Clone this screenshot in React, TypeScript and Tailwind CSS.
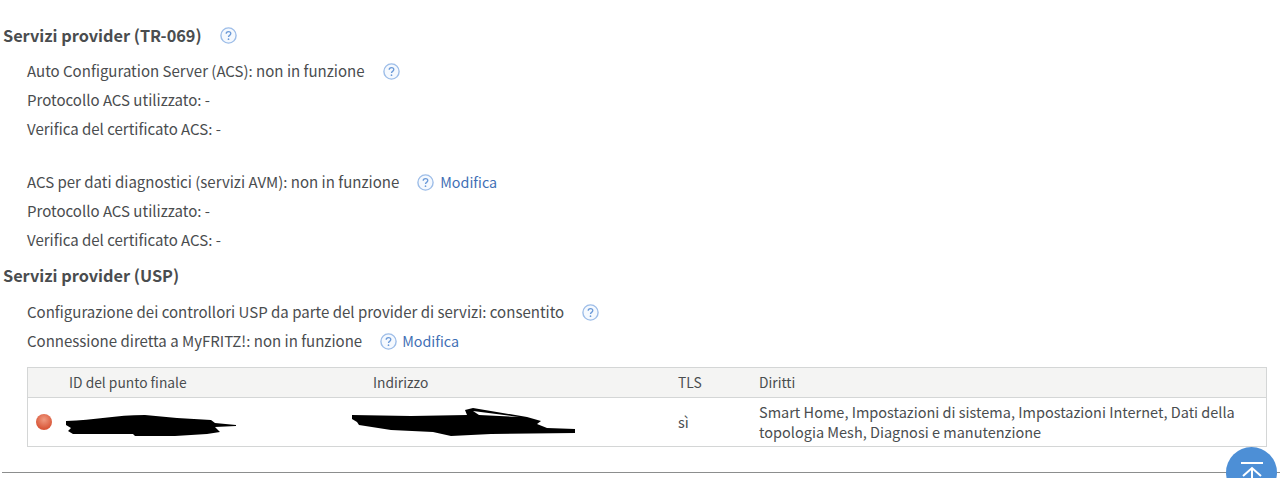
function HelpIcon({ className = "" }: { className?: string }) {
    return (
        <svg viewBox="0 0 17 17" className={`w-[17px] h-[17px] shrink-0 ${className}`} fill="none">
            <circle cx="8.5" cy="8.5" r="7.6" stroke="#9dbde8" strokeWidth="1.4" fill="#f5f9fe" />
            <path d="M6.2 6.8c0-1.4 1.1-2.2 2.3-2.2s2.3.8 2.3 2c0 1.8-2.3 1.7-2.3 3.4" stroke="#6b9ad8" strokeWidth="1.3" />
            <circle cx="8.5" cy="12.2" r=".85" fill="#6b9ad8" />
        </svg>
    );
}

function Row({ children }: { children: React.ReactNode }) {
    return <div className="flex items-center h-[29px] pl-[27px] whitespace-nowrap">{children}</div>;
}

function Scribble1() {
    return (
        <svg viewBox="0 0 172 22" className="w-[172px] h-[22px] ml-[-4px] mt-[7px]">
            <path d="M1 6 C30 5 50 0 80 0 L112 3 L146 5 L150 8 L171 10 L171 11 L150 12 L155 17 L142 19 L110 21 L70 21 L68 19 L8 19 L3 16 L6 13 L1 10Z" fill="#000" />
        </svg>
    );
}

function Scribble2() {
    return (
        <svg viewBox="0 0 226 28" className="w-[226px] h-[28px] ml-[-22px]">
            <path d="M1 7 L60 8 L116 7 L114 2 L122 0 L176 9 L190 13 L186 16 L196 20 L224 21 L224 25 L140 26 L100 28 L82 24 L40 22 L8 17 L6 14 L1 11Z" fill="#000" />
            <path d="M122 3 L168 9 L128 7Z" fill="#fff" />
        </svg>
    );
}

export default function App() {
    return (
        <div className="w-[1280px] h-[478px] overflow-hidden relative bg-white text-[#4a4d4f] text-[15.03px] font-['Noto_Sans_CJK_SC',sans-serif]">
            <div className="pt-[21px]">
                <h2 className="flex items-center h-[28px] pl-[3px] text-[16.3px] font-bold text-[#4a4d4f]">
                    Servizi provider (TR-069)
                    <HelpIcon className="ml-[18px]" />
                </h2>
                <div className="mt-[8px]">
                    <Row>
                        Auto Configuration Server (ACS): non in funzione
                        <HelpIcon className="ml-[18px]" />
                    </Row>
                    <Row>Protocollo ACS utilizzato: -</Row>
                    <Row>Verifica del certificato ACS: -</Row>
                </div>
                <div className="mt-[24px]">
                    <Row>
                        ACS per dati diagnostici (servizi AVM): non in funzione
                        <HelpIcon className="ml-[18px]" />
                        <a className="ml-[6px] mb-[2px] text-[14.3px] text-[#3f6fb5]">Modifica</a>
                    </Row>
                    <Row>Protocollo ACS utilizzato: -</Row>
                    <Row>Verifica del certificato ACS: -</Row>
                </div>
                <h2 className="flex items-center h-[28px] mt-[6px] pl-[3px] text-[16.3px] font-bold text-[#4a4d4f]">
                    Servizi provider (USP)
                </h2>
                <div className="mt-[9px]">
                    <Row>
                        Configurazione dei controllori USP da parte del provider di servizi: consentito
                        <HelpIcon className="ml-[18px]" />
                    </Row>
                    <Row>
                        Connessione diretta a MyFRITZ!: non in funzione
                        <HelpIcon className="ml-[18px]" />
                        <a className="ml-[5px] mb-[2px] text-[14.3px] text-[#3f6fb5]">Modifica</a>
                    </Row>
                </div>
                <div className="mt-[11px] ml-[27px] w-[1240px] border border-[#d4d6d6]">
                    <div className="flex items-center h-[30px] text-[13.8px] bg-[#f4f4f3] border-b border-[#d4d6d6]">
                        <div className="w-[41px]" />
                        <div className="w-[304px]">ID del punto finale</div>
                        <div className="w-[305px]">Indirizzo</div>
                        <div className="w-[81px]">TLS</div>
                        <div>Diritti</div>
                    </div>
                    <div className="flex items-center h-[48px] text-[14.5px]">
                        <div className="w-[41px] pl-[8px]">
                            <div className="w-4 h-4 rounded-full bg-[radial-gradient(circle_at_50%_35%,#f09a80,#d9583a_70%)]" />
                        </div>
                        <div className="w-[304px]"><Scribble1 /></div>
                        <div className="w-[305px]"><Scribble2 /></div>
                        <div className="w-[81px]">sì</div>
                        <div className="w-[500px] leading-[20px]">
                            Smart Home, Impostazioni di sistema, Impostazioni Internet, Dati della topologia Mesh, Diagnosi e manutenzione
                        </div>
                    </div>
                </div>
                <div className="mt-[25px] ml-[2px] h-px bg-[#8c8e8e]" />
            </div>
            <div className="absolute left-[1226px] top-[447px] w-[51px] h-[51px] rounded-full bg-[#4d8fd6] flex justify-center pt-[14px]">
                <svg viewBox="0 0 24 24" className="w-6 h-6" fill="none" stroke="#fff" strokeWidth="2">
                    <path d="M1 2h22M12 24V7M3 15l9-8 9 8" />
                </svg>
            </div>
        </div>
    );
}
